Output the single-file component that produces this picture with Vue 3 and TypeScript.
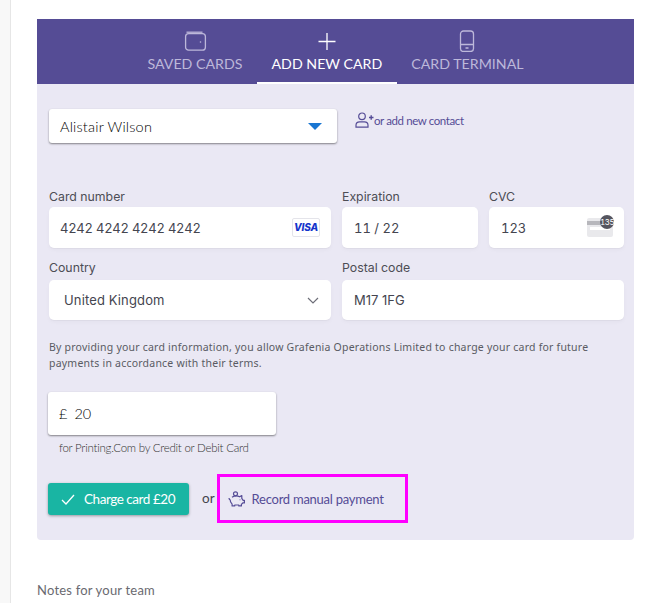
<script setup lang="ts">
const tabs = [
  { label: 'SAVED CARDS', icon: 'wallet', active: false },
  { label: 'ADD NEW CARD', icon: 'plus', active: true },
  { label: 'CARD TERMINAL', icon: 'terminal', active: false },
]
</script>

<template>
  <div class="page">
    <aside class="rail"></aside>
    <main class="main">
      <section class="panel">
        <nav class="tabs">
          <div v-for="t in tabs" :key="t.label" class="tab" :class="{ active: t.active }">
            <svg v-if="t.icon === 'wallet'" class="tab-icon" width="24" height="22" viewBox="0 0 24 22" fill="none" stroke="currentColor" stroke-width="1.3">
              <path d="M3.5 2.2h16" />
              <rect x="2.6" y="3.600" width="19.800" height="16.600" rx="3" />
              <circle cx="17.500" cy="12" r=".8" fill="currentColor" stroke="none" />
            </svg>
            <svg v-else-if="t.icon === 'plus'" class="tab-icon" width="24" height="22" viewBox="0 0 24 22" fill="none" stroke="currentColor" stroke-width="1.3">
              <path d="M12 3v17M3.500 11.500h17" />
            </svg>
            <svg v-else class="tab-icon" width="24" height="22" viewBox="0 0 24 22" fill="none" stroke="currentColor" stroke-width="1.3">
              <rect x="5.500" y="1" width="13" height="20.500" rx="3" />
              <path d="M5.500 14.500h13M10.500 18h3" />
            </svg>
            <span>{{ t.label }}</span>
          </div>
        </nav>

        <div class="body">
          <div class="contact-row">
            <div class="contact-select">
              <span>Alistair Wilson</span>
              <i class="caret"></i>
            </div>
            <div class="add-contact">
              <svg width="19" height="16" viewBox="0 0 19 16" fill="none" stroke="#554c96" stroke-width="1.2">
                <circle cx="7" cy="4.300" r="3.300" />
                <path d="M1 15.200v-2c0-2 1.600-3.400 3.600-3.400h4.800c2 0 3.600 1.400 3.600 3.400v2z" />
                <path d="M14 5.500h4.500M16.200 3.300v4.400" stroke-width="1.400" />
              </svg>
              <span>or add new contact</span>
            </div>
          </div>

          <div class="stripe-row first">
            <label class="field wide">
              <span class="label">Card number</span>
              <div class="input number">
                <span>4242 4242 4242 4242</span>
                <span class="visa">VISA</span>
              </div>
            </label>
            <label class="field exp">
              <span class="label">Expiration</span>
              <div class="input"><span>11 / 22</span></div>
            </label>
            <label class="field cvc">
              <span class="label">CVC</span>
              <div class="input">
                <span>123</span>
                <span class="cvc-card">
                  <i class="strip"></i>
                  <i class="line"></i>
                  <b class="badge">135</b>
                </span>
              </div>
            </label>
          </div>

          <div class="stripe-row second">
            <label class="field wide">
              <span class="label">Country</span>
              <div class="input short country">
                <span>United Kingdom</span>
                <svg width="12" height="7" viewBox="0 0 12 7" fill="none" stroke="#6d6e78" stroke-width="1.2">
                  <path d="M1 1l5 5 5-5" />
                </svg>
              </div>
            </label>
            <label class="field postal">
              <span class="label">Postal code</span>
              <div class="input short"><span>M17 1FG</span></div>
            </label>
          </div>

          <p class="terms">By providing your card information, you allow Grafenia Operations Limited to charge your card for future payments in accordance with their terms.</p>

          <div class="amount">
            <span class="pound">£</span>
            <span>20</span>
          </div>
          <p class="helper">for Printing.Com by Credit or Debit Card</p>

          <div class="actions">
            <button class="charge" type="button">
              <svg width="14" height="11" viewBox="0 0 14 11" fill="none" stroke="#fff" stroke-width="1.300">
                <path d="M1 6l4 4 8-9" />
              </svg>
              <span>Charge card £20</span>
            </button>
            <span class="or">or</span>
            <div class="manual">
              <svg width="17" height="16" viewBox="0 0 17 16" fill="none" stroke="#554c96" stroke-width="1.200" stroke-linejoin="round">
                <circle cx="7.500" cy="2.800" r="2" />
                <path d="M4 6.200c2.200-1.400 5.600-1.500 7.600-.4l2.200-1.200v2.900c.6.500 1 1.100 1.200 1.800h1.400v2.600h-1.600c-.3.500-.8 1-1.400 1.400v1.600h-2.600v-.9H6.700v.9H4.100v-1.700C2.800 11.700 2.100 10.300 2.200 9 1.500 8.600 1 7.900 1 7" />
                <circle cx="12" cy="8.800" r=".5" fill="#554c96" stroke="none" />
              </svg>
              <span>Record manual payment</span>
            </div>
          </div>
        </div>
      </section>
      <p class="notes">Notes for your team</p>
    </main>
  </div>
</template>

<style>
html, body { margin: 0; background: #fff; overflow: hidden; }
</style>

<style scoped>
.page {
  display: flex;
  width: 645px;
  height: 603px;
  overflow: hidden;
  font-family: Lato, sans-serif;
  background: #fff;
}
.rail {
  width: 10px;
  flex: none;
  background: #f8f8f8;
  border-right: 1px solid #e6e6e6;
}
.main {
  padding: 19px 0 0 26px;
  width: 597px;
  flex: none;
}
.panel {
  width: 597px;
  background: #eae8f4;
  border-radius: 0 0 4px 4px;
}
.tabs {
  display: flex;
  justify-content: center;
  height: 65px;
  background: #554c95;
}
.tab {
  display: flex;
  flex-direction: column;
  align-items: center;
  box-sizing: border-box;
  height: 65px;
  padding: 11px 14.500px 0;
  font-size: 14.200px;
  line-height: 17px;
  color: #bdb8da;
}
.tab.active {
  color: #fff;
  border-bottom: 2px solid #fff;
}
.tab-icon {
  display: block;
  margin-bottom: 3px;
}
.body {
  padding: 25px 10px 17px 11px;
}
.contact-row {
  display: flex;
  align-items: flex-start;
  margin-left: 1px;
}
.contact-select {
  display: flex;
  align-items: center;
  justify-content: space-between;
  box-sizing: border-box;
  width: 288px;
  height: 34px;
  padding: 0 15px 0 11px;
  background: #fff;
  border-radius: 3px;
  box-shadow: 0 1px 2px rgba(0, 0, 0, 0.45);
  font-size: 14.500px;
  font-weight: 300;
  letter-spacing: 0.2px;
  color: #000;
}
.caret {
  width: 0;
  height: 0;
  border-left: 7px solid transparent;
  border-right: 7px solid transparent;
  border-top: 7px solid #1976d2;
}
.add-contact {
  display: flex;
  align-items: center;
  margin: 3px 0 0 18px;
  font-size: 11.500px;
  letter-spacing: -0.4px;
  color: #554c96;
}
.stripe-row {
  display: flex;
  gap: 11px;
  margin-left: 1px;
}
.stripe-row.first { margin-top: 46px; }
.stripe-row.second { margin-top: 12px; }
.second .label { height: 20px; }
.field {
  display: flex;
  flex-direction: column;
  font-family: Inter, sans-serif;
  flex: none;
}
.wide { width: 282px; }
.exp { width: 136px; }
.cvc { width: 135px; }
.postal { width: 282px; }
.label {
  height: 18px;
  line-height: 16px;
  font-size: 12.300px;
  color: #4d4d55;
}
.input {
  display: flex;
  align-items: center;
  justify-content: space-between;
  box-sizing: border-box;
  height: 41px;
  padding: 0 11px;
  background: #fff;
  border-radius: 5px;
  box-shadow: 0 1px 1px rgba(0, 0, 0, 0.03), 0 2px 4px rgba(0, 0, 0, 0.03);
  font-size: 13px;
  font-variant-numeric: tabular-nums;
  color: #44454f;
}
.number { letter-spacing: -0.25px; }
.exp .input, .cvc .input { padding-left: 12px; }
.input.short { height: 40px; }
.postal .input { padding-left: 12px; font-variant-numeric: normal; }
.country { padding: 0 12px 0 15px; letter-spacing: 0.15px; }
.visa {
  box-sizing: border-box;
  width: 28px;
  height: 19px;
  border: 1px solid #e4e4ea;
  border-radius: 2px;
  background: #fff;
  text-align: center;
  font-size: 10px;
  line-height: 17px;
  font-weight: 800;
  font-style: italic;
  letter-spacing: -0.2px;
  color: #1434cb;
}
.cvc-card {
  position: relative;
  display: block;
  width: 26px;
  height: 19px;
  background: #e9e9ec;
  border-radius: 2px;
}
.strip {
  position: absolute;
  left: 0;
  right: 0;
  top: 3px;
  height: 4px;
  background: #b7b7bc;
}
.line {
  position: absolute;
  left: 3px;
  right: 3px;
  top: 9px;
  height: 3px;
  background: #fff;
}
.badge {
  position: absolute;
  right: -1px;
  top: -3px;
  width: 14px;
  height: 14px;
  border-radius: 50%;
  background: #55555f;
  color: #fff;
  font-size: 8px;
  font-weight: 400;
  line-height: 14px;
  text-align: center;
  letter-spacing: -0.4px;
}
.terms {
  width: 570px;
  margin: 19px 0 0 1px;
  font-size: 10.500px;
  line-height: 16px;
  letter-spacing: 0.22px;
  color: #595b63;
  font-family: "Noto Sans", sans-serif;
}
.amount {
  display: flex;
  align-items: center;
  gap: 7px;
  box-sizing: border-box;
  width: 228px;
  height: 43px;
  margin-top: 21px;
  padding-left: 11px;
  background: #fff;
  border-radius: 3px;
  box-shadow: 0 1px 2px rgba(0, 0, 0, 0.45);
  font-size: 14.500px;
  font-weight: 300;
  color: #000;
}
.helper {
  margin: 6px 0 0 11px;
  font-size: 11.500px;
  font-weight: 300;
  line-height: 14px;
  letter-spacing: -0.25px;
  color: #333;
}
.actions {
  display: flex;
  align-items: center;
  margin-top: 19px;
  height: 49px;
}
.charge {
  display: flex;
  align-items: center;
  gap: 9px;
  box-sizing: border-box;
  width: 141px;
  height: 32px;
  margin-top: 1px;
  padding: 0 0 0 13px;
  border: 0;
  border-radius: 3px;
  background: #19b5a3;
  box-shadow: 0 1px 3px rgba(0, 0, 0, 0.35);
  font: 13.500px Lato, sans-serif;
  letter-spacing: -0.45px;
  color: #fff;
}
.or {
  margin: 0 2px 0 13px;
  padding-bottom: 1px;
  font-size: 13.500px;
  color: #44444c;
}
.manual {
  display: flex;
  align-items: center;
  gap: 7px;
  box-sizing: border-box;
  width: 191px;
  height: 49px;
  padding-left: 8px;
  border: 3px solid #ff00ff;
  font-size: 13px;
  letter-spacing: -0.25px;
  color: #554c96;
}
.notes {
  margin: 42px 0 0;
  font-size: 13px;
  line-height: 16px;
  letter-spacing: 0.2px;
  color: #6a6a70;
}
</style>
